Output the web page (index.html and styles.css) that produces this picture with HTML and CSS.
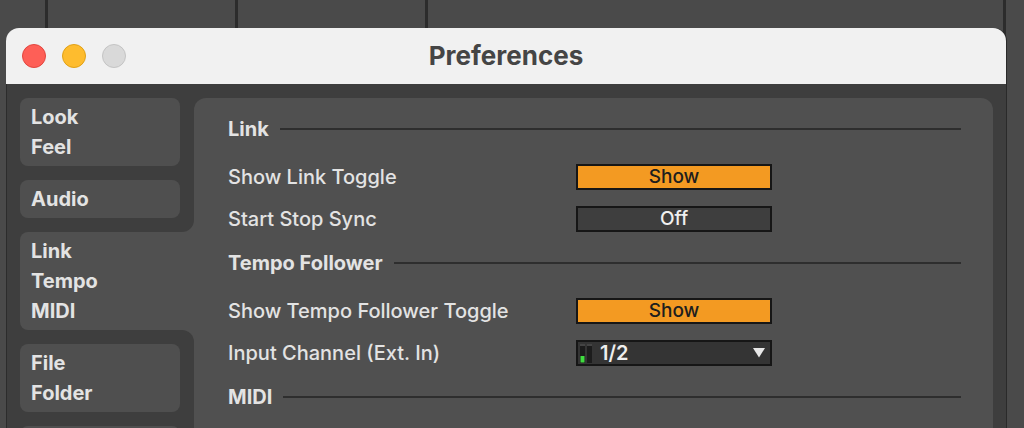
FILE: index.html
```html
<!DOCTYPE html>
<html lang="en">
<head>
  <meta charset="UTF-8">
  <meta name="viewport" content="width=device-width, initial-scale=1.0">
  <title>Preferences</title>
  <link rel="stylesheet" href="styles.css">
</head>
<body>

  <!-- app behind the window -->
  <div class="desktop">
    <div class="pane" style="width: 48px;"></div>
    <div class="pane" style="width: 190px;"></div>
    <div class="pane" style="width: 190px;"></div>
    <div class="pane" style="width: 578px;"></div>
    <div class="pane last"></div>
  </div>

  <div class="window">
    <div class="titlebar">
      <div class="lights">
        <span class="light red"></span>
        <span class="light yellow"></span>
        <span class="light grey"></span>
      </div>
      <h1 class="title">Preferences</h1>
    </div>

    <div class="window-body">
      <div class="sidebar">
        <div class="tab-group top">
          <div class="tab">Look<br>Feel</div>
          <div class="tab">Audio</div>
        </div>
        <div class="tab selected">Link<br>Tempo<br>MIDI</div>
        <div class="tab-group bottom">
          <div class="tab">File<br>Folder</div>
          <div class="tab empty"></div>
        </div>
      </div>

      <div class="panel">
        <div class="section">Link <span class="rule"></span></div>
        <div class="row">
          <span class="label">Show Link Toggle</span>
          <span class="toggle on">Show</span>
        </div>
        <div class="row">
          <span class="label">Start Stop Sync</span>
          <span class="toggle">Off</span>
        </div>

        <div class="section">Tempo Follower <span class="rule"></span></div>
        <div class="row">
          <span class="label">Show Tempo Follower Toggle</span>
          <span class="toggle on">Show</span>
        </div>
        <div class="row">
          <span class="label">Input Channel (Ext. In)</span>
          <span class="dropdown">
            <svg class="meter" width="13" height="19" viewBox="0 0 13 19">
              <rect x="0" y="0" width="5" height="19" fill="#1c1c1c"/>
              <rect x="0" y="0" width="5" height="2" fill="#444"/>
              <rect x="7" y="0" width="5" height="19" fill="#1c1c1c"/>
              <rect x="7" y="0" width="5" height="2" fill="#444"/>
              <rect x="0.5" y="12" width="4" height="6.5" fill="#3fdc3f"/>
            </svg>
            <span class="value">1/2</span>
            <svg class="arrow" width="12" height="10" viewBox="0 0 12 10">
              <path d="M0 0 L12 0 L6 9.5 Z" fill="#e8e8e8"/>
            </svg>
          </span>
        </div>

        <div class="section">MIDI <span class="rule"></span></div>
      </div>
    </div>
  </div>

</body>
</html>
```

FILE: styles.css
```css
body {
  margin: 0;
  height: 428px;
  overflow: hidden;
  background-color: #4a4a4a;
  font-family: Inter, 'Noto Sans', sans-serif;
  color: #e3e3e3;
}

.desktop {
  display: flex;
  height: 428px;
}

.pane {
  box-sizing: border-box;
  border-right: 3px solid #2c2c2c;
  background-color: #4a4a4a;
}

.pane.last {
  flex: 1;
  border-right: none;
}

.window {
  position: absolute;
  left: 6px;
  top: 28px;
  width: 1000px;
  height: 420px;
  border-radius: 13px 13px 0 0;
  overflow: hidden;
  background-color: #3e3e3e;
  box-shadow: 1px 0 0 #2a2a2a;
}

.titlebar {
  height: 56px;
  background-color: #f1f1f1;
  display: flex;
  align-items: center;
  position: relative;
}

.lights {
  display: flex;
  gap: 16px;
  padding-left: 16px;
}

.light {
  width: 24px;
  height: 24px;
  border-radius: 50%;
  box-sizing: border-box;
}

.red { background-color: #fe5f57; border: 1px solid #e2463f; }
.yellow { background-color: #febc2e; border: 1px solid #e1a116; }
.grey { background-color: #d9d9d9; border: 1px solid #c4c4c4; }

.title {
  position: absolute;
  left: 0;
  right: 0;
  margin: 0;
  padding-bottom: 2px;
  text-align: center;
  font-size: 26px;
  font-weight: 700;
  color: #454545;
}

.window-body {
  display: flex;
  padding: 14px 13px 0 13px;
  border-left: 1px solid #2c2c2c;
  height: 100%;
}

.sidebar {
  width: 174px;
  flex-shrink: 0;
  background: linear-gradient(to right, transparent 0 160px, #505050 160px);
}

.tab-group {
  background-color: #3e3e3e;
  padding-right: 14px;
  display: flex;
  flex-direction: column;
  gap: 14px;
}

.tab-group.top {
  padding-bottom: 14px;
  border-bottom-right-radius: 12px;
}

.tab-group.bottom {
  padding-top: 14px;
  border-top-right-radius: 12px;
  height: 200px;
}

.tab {
  background-color: #4f4f4f;
  border-radius: 8px;
  padding: 4px 11px;
  font-size: 20px;
  font-weight: 700;
  line-height: 30px;
  color: #e3e3e3;
}

.tab.empty {
  height: 60px;
}

.tab.selected {
  background-color: #505050;
  border-radius: 8px 0 0 8px;
}

.panel {
  flex: 1;
  background-color: #505050;
  border-radius: 12px 12px 0 0;
  padding: 8px 32px 0 34px;
}

.section {
  display: flex;
  align-items: center;
  height: 46px;
  padding-bottom: 4px;
  font-size: 20px;
  font-weight: 700;
}

.rule {
  flex: 1;
  height: 2px;
  margin-left: 11px;
  background-color: #2e2e2e;
}

.row {
  display: flex;
  align-items: center;
  height: 42px;
  font-size: 20px;
  font-weight: 500;
}

.label {
  width: 348px;
}

.toggle {
  box-sizing: border-box;
  width: 196px;
  height: 26px;
  border: 2px solid #161616;
  background-color: #3e3e3e;
  text-align: center;
  line-height: 22px;
  font-size: 19px;
  font-weight: 500;
  color: #f0f0f0;
}

.toggle.on {
  background-color: #f39a22;
  color: #1e1e1e;
}

.dropdown {
  box-sizing: border-box;
  width: 196px;
  height: 26px;
  border: 2px solid #161616;
  background-color: #343434;
  display: flex;
  align-items: center;
  padding: 0 5px 0 1px;
  font-size: 20px;
  font-weight: 600;
  color: #eeeeee;
}

.meter {
  margin-left: 1px;
}

.value {
  flex: 1;
  margin-left: 7px;
}
```
